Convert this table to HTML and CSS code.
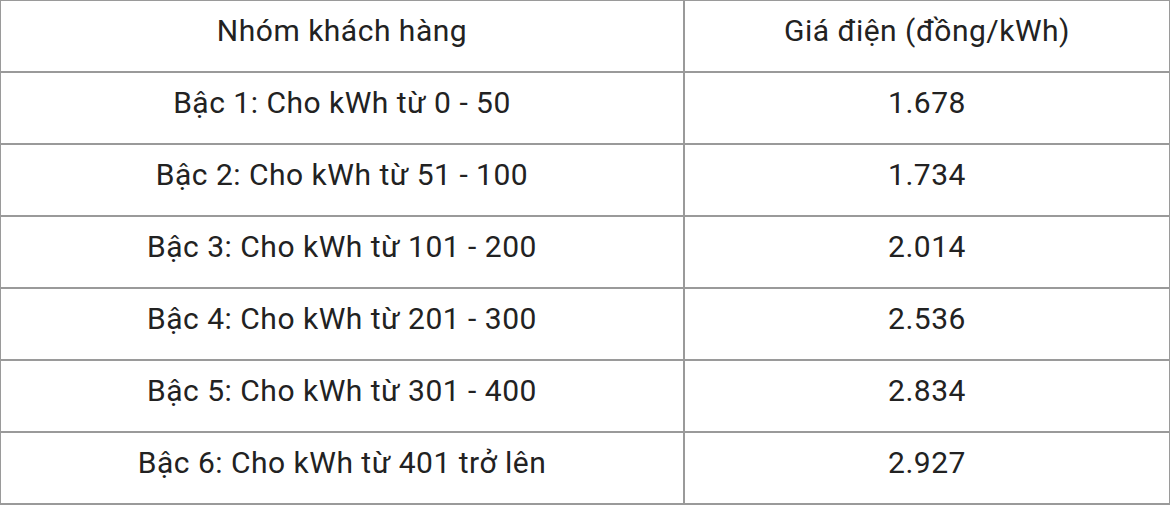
FILE: index.html
```html
<!DOCTYPE html>
<html lang="vi">
<head>
<meta charset="utf-8">
<link rel="stylesheet" href="styles.css">
</head>
<body>
<table class="price-table">
  <thead>
    <tr><th class="col-group">Nhóm khách hàng</th><th class="col-price">Giá điện (đồng/kWh)</th></tr>
  </thead>
  <tbody>
    <tr><td>Bậc 1: Cho kWh từ 0 - 50</td><td>1.678</td></tr>
    <tr><td>Bậc 2: Cho kWh từ 51 - 100</td><td>1.734</td></tr>
    <tr><td>Bậc 3: Cho kWh từ 101 - 200</td><td>2.014</td></tr>
    <tr><td>Bậc 4: Cho kWh từ 201 - 300</td><td>2.536</td></tr>
    <tr><td>Bậc 5: Cho kWh từ 301 - 400</td><td>2.834</td></tr>
    <tr><td>Bậc 6: Cho kWh từ 401 trở lên</td><td>2.927</td></tr>
  </tbody>
</table>
</body>
</html>
```
FILE: styles.css
```css
html, body {
  margin: 0;
  padding: 0;
  background: #ffffff;
}
body {
  font-family: Roboto, "Noto Sans", sans-serif;
  color: #222222;
}
.price-table {
  border-collapse: collapse;
  margin: -1px 0 0 -1px;
  width: 1170px;
  table-layout: fixed;
}
.price-table th,
.price-table td {
  border: 2px solid #9a9a9a;
  height: 72px;
  padding: 0 0 11px 0;
  box-sizing: border-box;
  text-align: center;
  vertical-align: middle;
  font-size: 30px;
  font-weight: 400;
  letter-spacing: 0.5px;
}
.col-group { width: 684px; }
.col-price { width: 486px; }
```
